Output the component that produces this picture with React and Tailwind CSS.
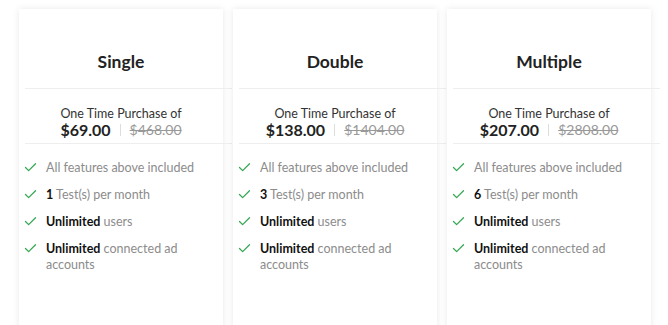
import { Check } from 'lucide-react'

const plans = [
  { name: 'Single', price: '$69.00', was: '$468.00', tests: '1' },
  { name: 'Double', price: '$138.00', was: '$1404.00', tests: '3' },
  { name: 'Multiple', price: '$207.00', was: '$2808.00', tests: '6' },
]

const Feature = ({ children }) => (
  <li className="flex items-start">
    <Check size={15} strokeWidth={2} className="ml-[4px] mr-[8px] shrink-0 text-[#33a852]" />
    <span className="text-[12.5px] leading-4 text-[#8c8c8c] max-w-[160px]">{children}</span>
  </li>
)

const PlanCard = ({ plan }) => (
  <div className="relative w-[204px] h-[340px] shrink-0 bg-white shadow-[0_0_7px_rgba(0,0,0,0.09)]">
    <h3 className="pt-[41px] text-center text-[17.5px] leading-6 font-bold text-[#222]">{plan.name}</h3>
    <div className="mt-[14px] ml-[6px] -mr-[9px] h-px bg-[#eeeeee]" />
    <div className="mt-[17px] text-center">
      <p className="text-[12.5px] leading-[15px] text-[#333]">One Time Purchase of</p>
      <div className="flex items-center justify-center leading-[18px]">
        <span className="text-[16px] font-bold text-[#222]">{plan.price}</span>
        <span className="mx-[9px] h-[12px] w-px bg-[#dddddd]" />
        <span className="text-[14px] text-[#999] line-through">{plan.was}</span>
      </div>
    </div>
    <div className="mt-[4px] ml-[6px] -mr-[9px] h-px bg-[#eeeeee]" />
    <ul className="pt-[16px] flex flex-col gap-[11px]">
      <Feature>All features above included</Feature>
      <Feature><b className="font-bold text-[#111]">{plan.tests}</b> Test(s) per month</Feature>
      <Feature><b className="font-bold text-[#111]">Unlimited</b> users</Feature>
      <Feature><b className="font-bold text-[#111]">Unlimited</b> connected ad accounts</Feature>
    </ul>
  </div>
)

export default function App() {
  return (
    <div className="w-[668px] h-[325px] overflow-hidden bg-white font-['Lato',sans-serif]">
      <div className="flex gap-[10px] pl-[19px] pt-[9px]">
        {plans.map((p) => (
          <PlanCard key={p.name} plan={p} />
        ))}
      </div>
    </div>
  )
}
